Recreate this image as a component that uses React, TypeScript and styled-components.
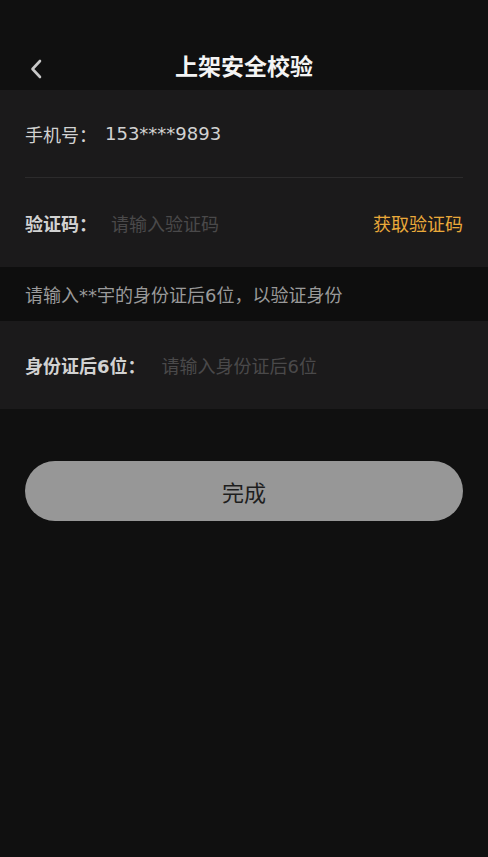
import React from "react";
import styled, { createGlobalStyle } from "styled-components";

const Global = createGlobalStyle`
  html, body { margin: 0; padding: 0; background: #101010; }
  body { font-family: "DejaVu Sans", "Noto Sans CJK SC", sans-serif; }
  * { box-sizing: border-box; }
`;

const Page = styled.div`
  width: 488px;
  min-height: 857px;
  background: #101010;
  display: flex;
  flex-direction: column;
`;

const NavBar = styled.div`
  height: 90px;
  padding-top: 42px;
  padding-bottom: 2px;
  display: flex;
  align-items: center;
  justify-content: center;
  position: relative;
`;

const Back = styled.div`
  position: absolute;
  left: 26px;
  top: 57px;
  width: 20px;
  height: 24px;
  display: flex;
  align-items: center;
  justify-content: center;
`;

const Title = styled.div`
  color: #f4f4f4;
  font-family: "Noto Sans CJK SC", sans-serif;
  font-size: 23px;
  font-weight: 700;
  line-height: 46px;
`;

const Card = styled.div`
  background: #1b1a1b;
  padding: 0 25px;
`;

const Row = styled.div<{ $divider?: boolean }>`
  height: 88px;
  display: flex;
  align-items: center;
  border-bottom: ${(p) => (p.$divider ? "1px solid #2c2b2c" : "none")};
  font-size: 18px;
`;

const Label = styled.span<{ $bold?: boolean }>`
  color: #d2d2d2;
  font-weight: ${(p) => (p.$bold ? 600 : 400)};
  white-space: nowrap;
  margin-right: ${(p) => (p.$bold ? 0 : 8)}px;
`;

const Value = styled.span`
  color: #d2d2d2;
`;

const Placeholder = styled.span<{ $gap: number }>`
  color: #4a494a;
  margin-left: ${(p) => p.$gap}px;
  flex: 1;
`;

const GetCode = styled.span`
  color: #eaa93a;
`;

const Hint = styled.div`
  height: 54px;
  background: #0e0e0e;
  padding: 0 25px;
  display: flex;
  align-items: center;
  color: #9a9a9a;
  font-size: 18px;
`;

const Button = styled.div`
  margin: 52px 25px 0;
  height: 60px;
  border-radius: 30px;
  background: #979797;
  color: #1e1e1e;
  font-family: "Noto Sans CJK SC", sans-serif;
  font-size: 22px;
  display: flex;
  align-items: center;
  justify-content: center;
`;

export default function App() {
  return (
    <Page>
      <Global />
      <NavBar>
        <Back>
          <svg width="16" height="22" viewBox="0 0 16 22">
            <polyline
              points="12,3 4.5,11 12,19"
              fill="none"
              stroke="#c8c8c8"
              strokeWidth="2.6"
              strokeLinecap="round"
              strokeLinejoin="round"
            />
          </svg>
        </Back>
        <Title>上架安全校验</Title>
      </NavBar>
      <Card>
        <Row $divider>
          <Label>手机号：</Label>
          <Value>153****9893</Value>
        </Row>
        <Row style={{ height: 89 }}>
          <Label $bold>验证码：</Label>
          <Placeholder $gap={14}>请输入验证码</Placeholder>
          <GetCode>获取验证码</GetCode>
        </Row>
      </Card>
      <Hint>请输入**宇的身份证后6位，以验证身份</Hint>
      <Card>
        <Row>
          <Label $bold>身份证后6位：</Label>
          <Placeholder $gap={16}>请输入身份证后6位</Placeholder>
        </Row>
      </Card>
      <Button>完成</Button>
    </Page>
  );
}
